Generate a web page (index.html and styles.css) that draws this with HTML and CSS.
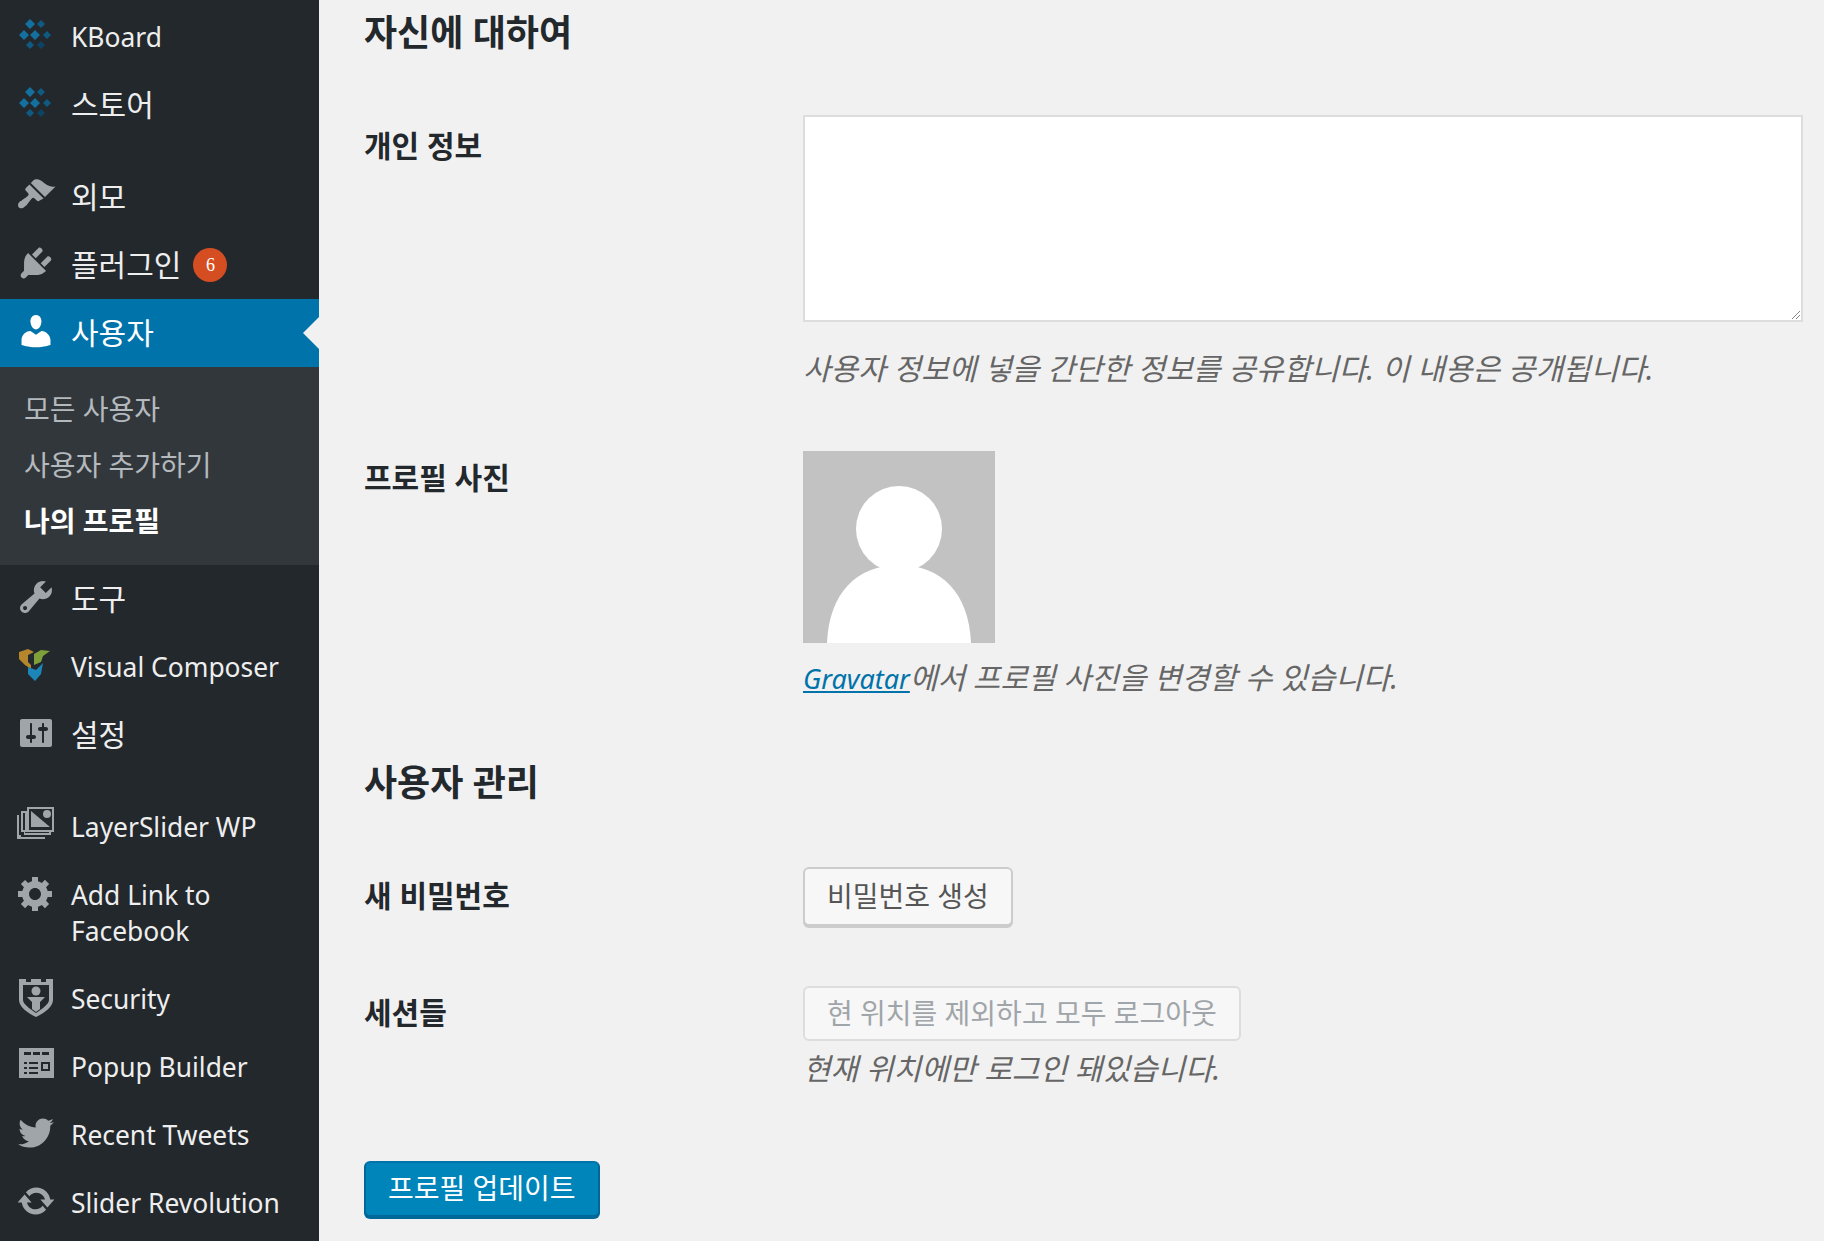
FILE: index.html
```html
<!DOCTYPE html>
<html lang="ko">
<head>
    <meta charset="UTF-8">
    <title>프로필</title>
    <link rel="stylesheet" href="styles.css">
</head>
<body>
    <div class="wrap">
        <nav class="sidebar">
            <ul class="menu">
                <li class="menu-item">
                    <svg class="icon" viewBox="0 0 40 40"><path class="kb-a" d="M14 4l5 5-5 5-5-5zM8 15l5 5-5 5-5-5zM19 15l5 5-5 5-5-5z"/><path class="kb-b" d="M25 5l4 4-4 4-4-4zM31 16l4 4-4 4-4-4zM14 26l4 4-4 4-4-4z"/><path class="kb-c" d="M25 26l4 4-4 4-4-4z"/></svg>
                    <span>KBoard</span>
                </li>
                <li class="menu-item">
                    <svg class="icon" viewBox="0 0 40 40"><path class="kb-a" d="M14 4l5 5-5 5-5-5zM8 15l5 5-5 5-5-5zM19 15l5 5-5 5-5-5z"/><path class="kb-b" d="M25 5l4 4-4 4-4-4zM31 16l4 4-4 4-4-4zM14 26l4 4-4 4-4-4z"/><path class="kb-c" d="M25 26l4 4-4 4-4-4z"/></svg>
                    <span class="ko">스토어</span>
                </li>
                <li class="menu-item menu-sep">
                    <svg class="icon" viewBox="0 0 20 20"><path d="M14.48 11.06L7.41 3.99l1.5-1.5c.5-.56 2.3-.47 3.51.32 1.21.8 1.43 1.28 2.91 2.1 1.18.64 2.45 1.26 4.45.85zm-.71.71L6.7 4.7 4.93 6.47c-.39.39-.39 1.02 0 1.41l1.06 1.06c.39.39.39 1.03 0 1.42-.6.6-1.43 1.11-2.21 1.69-.35.26-.7.53-1.01.84C1.43 13.23.5 14.84 1.43 16.27c.97.93 2.58.02 3.94-1.33.31-.31.58-.66.85-1.02.57-.78 1.08-1.6 1.69-2.21.39-.39 1.02-.39 1.41 0l1.06 1.06c.39.39 1.02.39 1.41 0z"/></svg>
                    <span class="ko">외모</span>
                </li>
                <li class="menu-item">
                    <svg class="icon" viewBox="0 0 20 20"><path d="M13.11 4.36L9.87 7.6 8 5.73l3.24-3.24c.35-.34 1.05-.2 1.56.32.52.51.66 1.21.31 1.55zm-8 1.77l.91-1.12 9.01 9.01-1.19.84c-.71.71-2.63 1.16-3.82 1.16H6.14L4.9 17.26c-.59.59-1.54.59-2.12 0-.59-.58-.59-1.53 0-2.12l1.24-1.24v-3.88c0-1.13.4-3.19 1.09-3.89zm7.26 3.97l3.24-3.24c.34-.35 1.04-.21 1.55.31.52.51.66 1.21.31 1.55l-3.24 3.25z"/></svg>
                    <span class="ko">플러그인</span>
                    <span class="badge">6</span>
                </li>
                <li class="menu-item current">
                    <svg class="icon" viewBox="0 0 20 20"><path d="M10 9.25c-2.27 0-2.73-3.44-2.73-3.44C7 4.02 7.82 2 9.97 2c2.16 0 2.98 2.02 2.71 3.81 0 0-.41 3.44-2.68 3.44zm0 2.57L12.72 10c2.39 0 4.52 2.33 4.52 4.53v2.49s-3.65 1.13-7.24 1.13c-3.65 0-7.24-1.13-7.24-1.13v-2.49c0-2.25 1.94-4.48 4.47-4.48z"/></svg>
                    <span class="ko">사용자</span>
                </li>
                <li class="submenu">
                    <a class="sub-link">모든 사용자</a>
                    <a class="sub-link">사용자 추가하기</a>
                    <a class="sub-link active">나의 프로필</a>
                </li>
                <li class="menu-item">
                    <svg class="icon" viewBox="0 0 20 20"><path d="M16.68 9.77c-1.34 1.34-3.3 1.67-4.95.99l-5.41 6.52c-.99.99-2.59.99-3.58 0s-.99-2.59 0-3.57l6.52-5.42c-.68-1.65-.35-3.61.99-4.95 1.28-1.28 3.12-1.62 4.72-1.06l-2.89 2.89 2.82 2.82 2.86-2.87c.53 1.58.18 3.39-1.08 4.65zM3.81 16.21c.4.39 1.04.39 1.43 0 .4-.4.4-1.04 0-1.43-.39-.4-1.03-.4-1.43 0-.39.39-.39 1.03 0 1.43z"/></svg>
                    <span class="ko">도구</span>
                </li>
                <li class="menu-item">
                    <svg class="icon" viewBox="0 0 40 40"><path fill="#b5862b" d="M3 7l9-3 6 3-6 3v7l3 3v4l-6-4-6-6z"/><path fill="#7f9f3a" d="M18 9l7-4 9 1-7 5-2 6-7 3v-6z"/><path fill="#1d86b8" d="M12 22l8 3 7-7-2 11-6 7-7-7z"/></svg>
                    <span>Visual Composer</span>
                </li>
                <li class="menu-item">
                    <svg class="icon" viewBox="0 0 20 20"><path d="M18 16V4c0-.55-.45-1-1-1H3c-.55 0-1 .45-1 1v12c0 .55.45 1 1 1h14c.55 0 1-.45 1-1zM8 11h1c.55 0 1 .45 1 1s-.45 1-1 1H8v1.5c0 .28-.22.5-.5.5s-.5-.22-.5-.5V13H6c-.55 0-1-.45-1-1s.45-1 1-1h1V5.5c0-.28.22-.5.5-.5s.5.22.5.5V11zm5-2h-1c-.55 0-1-.45-1-1s.45-1 1-1h1V5.5c0-.28.22-.5.5-.5s.5.22.5.5V7h1c.55 0 1 .45 1 1s-.45 1-1 1h-1v5.5c0 .28-.22.5-.5.5s-.5-.22-.5-.5V9z"/></svg>
                    <span class="ko">설정</span>
                </li>
                <li class="menu-item menu-sep">
                    <svg class="icon" viewBox="0 0 40 40"><path fill-rule="evenodd" d="M11 2h27v25h-3v3H8v-3H5V6h6zm2 2v21h23V4zM9 8H7v17h2zm0 19v1h24v-1z M3 10v20h2v2h24v2H1V10z"/><path d="M15 6l19 16H15z"/><circle cx="31" cy="9" r="4"/></svg>
                    <span>LayerSlider WP</span>
                </li>
                <li class="menu-item">
                    <svg class="icon" viewBox="0 0 20 20"><path d="M18 12h-2.18c-.17.7-.44 1.35-.81 1.93l1.54 1.54-2.1 2.1-1.54-1.54c-.58.36-1.23.63-1.91.79V19H8v-2.18c-.68-.16-1.33-.43-1.91-.79l-1.54 1.54-2.12-2.12 1.54-1.54c-.36-.58-.63-1.23-.79-1.91H1V9.03h2.17c.16-.7.44-1.35.8-1.94L2.43 5.55l2.1-2.1 1.54 1.54c.58-.37 1.24-.64 1.93-.81V2h3v2.18c.68.16 1.33.43 1.91.79l1.54-1.54 2.12 2.12-1.54 1.54c.36.59.64 1.24.8 1.94H18V12zm-8.5 1.5c1.66 0 3-1.34 3-3s-1.34-3-3-3-3 1.34-3 3 1.34 3 3 3z"/></svg>
                    <span>Add Link to<br>Facebook</span>
                </li>
                <li class="menu-item">
                    <svg class="icon" viewBox="0 0 40 40"><path fill-rule="evenodd" d="M3 2h7v3h5V2h10v3h5V2h7v21c0 7-9 13-17 17C12 36 3 30 3 23zm4 6v15c0 4 7 9 13 13 6-4 13-9 13-13V8z"/><circle cx="20" cy="14" r="4.5"/><path d="M11 20h18l-5 5v7l-4 3-4-3v-7z"/></svg>
                    <span>Security</span>
                </li>
                <li class="menu-item">
                    <svg class="icon" viewBox="0 0 40 40"><path fill-rule="evenodd" d="M3 3h35v30H3zm5 4v3h7V7zm9 0v3h7V7zm9 0v3h7V7zM8 17v2h3v-2zm5 0v2h9v-2zm12 0v9h9v-9zM8 22v2h3v-2zm5 0v2h9v-2zM8 27v2h3v-2zm5 0v2h9v-2z"/><path d="M27 19h5v5h-5z"/></svg>
                    <span>Popup Builder</span>
                </li>
                <li class="menu-item">
                    <svg class="icon" viewBox="0 0 20 20"><path d="M18.94 4.46c-.49.73-1.11 1.38-1.83 1.9.01.15.01.31.01.47 0 4.85-3.69 10.44-10.43 10.44-2.07 0-4-.61-5.63-1.65.29.03.58.05.88.05 1.72 0 3.3-.59 4.55-1.57-1.6-.03-2.95-1.09-3.42-2.55.22.04.45.07.69.07.33 0 .66-.05.96-.13-1.67-.34-2.94-1.82-2.94-3.6v-.04c.5.27 1.06.44 1.66.46-.98-.66-1.63-1.78-1.63-3.06 0-.67.18-1.3.5-1.84 1.81 2.22 4.51 3.68 7.56 3.83-.06-.27-.1-.55-.1-.84 0-2.02 1.65-3.66 3.67-3.66 1.06 0 2.01.44 2.68 1.16.83-.17 1.62-.47 2.33-.89-.28.85-.86 1.57-1.62 2.02.75-.08 1.45-.28 2.11-.57z"/></svg>
                    <span>Recent Tweets</span>
                </li>
                <li class="menu-item">
                    <svg class="icon" viewBox="0 0 20 20"><path d="M10.2 3.28c3.53 0 6.43 2.61 6.92 6h2.08l-3.5 4-3.5-4h2.32c-.45-1.97-2.21-3.45-4.32-3.45-1.45 0-2.73.71-3.54 1.78L4.95 5.66C6.23 4.2 8.11 3.28 10.2 3.28zm-.4 13.44c-3.52 0-6.43-2.61-6.92-6H.8l3.5-4c1.17 1.33 2.33 2.67 3.5 4H5.48c.45 1.97 2.21 3.45 4.32 3.45 1.45 0 2.73-.71 3.54-1.78l1.71 1.95c-1.28 1.46-3.15 2.38-5.25 2.38z"/></svg>
                    <span>Slider Revolution</span>
                </li>
            </ul>
        </nav>

        <main class="content">
            <h2 class="section-title first">자신에 대하여</h2>

            <div class="form-row row-bio">
                <div class="row-label label-bio">개인 정보</div>
                <div class="row-field">
                    <div class="textarea">
                        <svg class="resize-grip" viewBox="0 0 12 12"><path d="M11 3L3 11M11 7l-4 4"/></svg>
                    </div>
                    <p class="description">사용자 정보에 넣을 간단한 정보를 공유합니다. 이 내용은 공개됩니다.</p>
                </div>
            </div>

            <div class="form-row row-bio">
                <div class="row-label label-avatar">프로필 사진</div>
                <div class="row-field">
                    <svg class="avatar" viewBox="0 0 192 192"><rect width="192" height="192" fill="#c2c2c2"/><circle cx="96" cy="78" r="43" fill="#fff"/><path fill="#fff" d="M24 192c2-50 30-78 72-78s70 28 72 78z"/></svg>
                    <p class="description desc-avatar"><a class="link">Gravatar</a>에서 프로필 사진을 변경할 수 있습니다.</p>
                </div>
            </div>

            <h2 class="section-title">사용자 관리</h2>

            <div class="form-row">
                <div class="row-label label-pass">새 비밀번호</div>
                <div class="row-field">
                    <button class="btn">비밀번호 생성</button>
                </div>
            </div>

            <div class="form-row row-sessions">
                <div class="row-label label-sessions">세션들</div>
                <div class="row-field">
                    <button class="btn disabled">현 위치를 제외하고 모두 로그아웃</button>
                    <p class="description desc-sessions">현재 위치에만 로그인 돼있습니다.</p>
                </div>
            </div>

            <button class="btn primary">프로필 업데이트</button>
        </main>
    </div>
</body>
</html>
```

FILE: styles.css
```css
* {
    margin: 0;
    padding: 0;
    box-sizing: border-box;
}

body {
    font-family: "Noto Sans", "Noto Sans CJK KR", sans-serif;
    background: #f1f1f1;
    color: #23282d;
    height: 100vh;
    overflow: hidden;
}

.wrap {
    display: flex;
    height: 100%;
}

/* sidebar */
.sidebar {
    width: 319px;
    flex-shrink: 0;
    background: #23282d;
    padding-top: 3px;
}

.menu {
    list-style: none;
}

.menu-item {
    display: flex;
    align-items: flex-start;
    padding: 16px 0 16px 16px;
    color: #eee;
    font-size: 26.4px;
    line-height: 36px;
    position: relative;
}

.menu-item .ko {
    font-size: 30px;
}

.menu-sep {
    margin-top: 24px;
}

.icon {
    width: 40px;
    height: 40px;
    margin: -4px 15px 0 0;
    flex-shrink: 0;
    fill: #a0a5aa;
    margin-bottom: -4px;
}

.kb-a {
    fill: #14709e;
}

.kb-b {
    fill: #0f5a82;
}

.kb-c {
    fill: #0c4262;
}

.badge {
    width: 34px;
    height: 34px;
    margin: 1px 0 0 12px;
    border-radius: 50%;
    background: #d54e21;
    color: #fff;
    font-family: "Liberation Serif", serif;
    font-size: 18px;
    line-height: 34px;
    text-align: center;
}

.current {
    background: #0073aa;
    color: #fff;
}

.current .icon {
    fill: #fff;
}

.current::after {
    content: "";
    position: absolute;
    right: 0;
    top: 18px;
    border: 16px solid transparent;
    border-right-color: #f1f1f1;
    border-left-width: 0;
}

.submenu {
    background: #32373c;
    padding: 14px 0 16px;
}

.sub-link {
    display: block;
    height: 56px;
    padding-left: 24px;
    color: #b4b9be;
    font-size: 28px;
    line-height: 56px;
}

.sub-link.active {
    color: #fff;
    font-weight: 700;
}

/* profile form */
.content {
    flex: 1;
    padding: 13px 21px 0 45px;
}

.section-title {
    font-size: 36px;
    line-height: 40px;
    font-weight: 700;
    margin: 64px 0;
}

.section-title.first {
    margin: 0 0 62px;
}

.form-row {
    display: grid;
    grid-template-columns: 439px 1fr;
}

.row-bio {
    margin-bottom: 62px;
}

.row-sessions {
    margin-top: 60px;
    margin-bottom: 72px;
}

.row-label {
    font-size: 30px;
    line-height: 40px;
    font-weight: 700;
}

.label-bio {
    padding-top: 11px;
}

.label-avatar {
    padding-top: 7px;
}

.label-pass {
    padding-top: 9px;
}

.label-sessions {
    padding-top: 7px;
}

.textarea {
    height: 207px;
    background: #fff;
    border: 2px solid #ddd;
    position: relative;
}

.resize-grip {
    position: absolute;
    right: 0;
    bottom: 0;
    width: 12px;
    height: 12px;
    stroke: #888;
    stroke-width: 1;
    fill: none;
}

.description {
    margin-top: 27px;
    font-size: 30px;
    line-height: 40px;
    font-style: italic;
    color: #666;
}

.desc-avatar {
    margin-top: 15px;
}

.desc-sessions {
    margin-top: 8px;
}

.link {
    color: #0073aa;
    font-size: 27px;
    text-decoration: underline;
}

.avatar {
    display: block;
    width: 192px;
    height: 192px;
}

.btn {
    display: block;
    height: 59px;
    padding: 0 22px 4px;
    background: #f7f7f7;
    border: 2px solid #ccc;
    border-radius: 6px;
    box-shadow: 0 2px 0 #ccc;
    color: #555;
    font-family: inherit;
    font-size: 28px;
}

.btn.disabled {
    height: 55px;
    background: #f7f7f7;
    border-color: #ddd;
    box-shadow: none;
    color: #a0a5aa;
}

.btn.primary {
    background: #0085ba;
    border-color: #0073aa #006799 #006799;
    box-shadow: 0 2px 0 #006799;
    color: #fff;
    height: 56px;
}
```
